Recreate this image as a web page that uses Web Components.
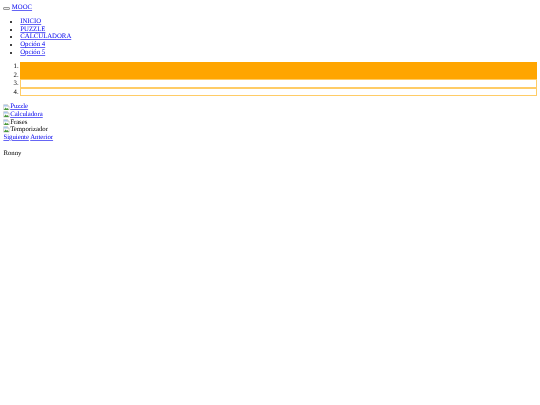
<!DOCTYPE html>
<html lang="es">
<head>
<meta charset="utf-8">
<title>MOOC</title>
<style>
  html, body { margin: 0; background: #fff; }
</style>
</head>
<body>
<mooc-page>
  <site-header></site-header>
  <slide-dots></slide-dots>
  <slide-list>
    <slide-item icon href="#">Puzzle</slide-item>
    <slide-item icon href="#">Calculadora</slide-item>
    <slide-item icon>Frases</slide-item>
    <slide-item icon>Temporizador</slide-item>
    <slide-item><a href="#">Siguiente</a> <a href="#">Anterior</a></slide-item>
  </slide-list>
  <site-footer>Ronny</site-footer>
</mooc-page>

<script>
// shared link colours, rules from outside don't reach the shadow roots
const linkCss = 'a { color: #00e; text-decoration: underline rgba(0, 0, 238, 0.6); }';

// the reference is a 1280 wide page shrunk to 540, hence the small sizes
// the blur stands in for the softness of the shrunk picture
class MoocPage extends HTMLElement {
  constructor() {
    super();
    this.shadow = this.attachShadow({mode: 'open'});
    this.shadow.innerHTML = `
      <style>
        :host {
          display: block;
          padding: 3.9px 3.375px 3.375px;
          font: 6.75px/7.6px "Liberation Serif", "Times New Roman", serif;
          text-rendering: geometricPrecision;
          color: #000;
          filter: blur(0.4px);
        }
      </style>
      <slot></slot>
    `;
  }
}

class SiteHeader extends HTMLElement {
  constructor() {
    super();
    this.shadow = this.attachShadow({mode: 'open'});
    this.shadow.innerHTML = `
      <style>
        :host { display: block; }
        ${linkCss}
        button {
          box-sizing: border-box;
          width: 6.75px;
          height: 2.5px;
          padding: 0;
          margin: 0 1.7px 0 0;
          background: #efefef;
          border: 0.5px solid #999;
          border-radius: 1px;
        }
        ul { margin: 6.75px 0 0; padding-left: 16.875px; }
      </style>
      <div><button></button><a href="#">MOOC</a></div>
      <ul>
        <li><a href="#">INICIO</a></li>
        <li><a href="#">PUZZLE</a></li>
        <li><a href="#">CALCULADORA</a></li>
        <li><a href="#">Opción 4</a></li>
        <li><a href="#">Opción 5</a></li>
      </ul>
    `;
  }
}

class SlideDots extends HTMLElement {
  constructor() {
    super();
    this.shadow = this.attachShadow({mode: 'open'});
    this.shadow.innerHTML = `
      <style>
        :host { display: block; }
        ol { margin: 6.25px 0 7.25px; padding-left: 16.875px; }
        li { box-sizing: border-box; height: 8.44px; border: 1px solid #ffcc66; background: #fff; }
        li.on { background: orange; border-color: orange; }
      </style>
      <ol>
        <li class="on"></li>
        <li class="on"></li>
        <li></li>
        <li></li>
      </ol>
    `;
  }
}

class SlideList extends HTMLElement {
  constructor() {
    super();
    this.shadow = this.attachShadow({mode: 'open'});
    this.shadow.innerHTML = `
      <style>
        :host { display: block; }
      </style>
      <slot></slot>
    `;
  }
}

class SlideItem extends HTMLElement {
  constructor() {
    super();
    this.shadow = this.attachShadow({mode: 'open'});
    const icon = this.hasAttribute('icon') ? `
      <svg width="6.75" height="6.75" viewBox="0 0 16 16">
        <path d="M1.5 1.5h9l4 4v9h-13z" fill="#fff" stroke="#9a9a9a"/>
        <path d="M10.5 1.5v4h4" fill="#e8e8e8" stroke="#9a9a9a"/>
        <path d="M2 14l4-6 3 3 2-1.5 3 4.5z" fill="#4a9a3c"/>
        <path d="M2 2h8v4H2z" fill="#a9c8f0"/>
      </svg>` : '';
    const href = this.getAttribute('href');
    const body = href !== null ? `<a href="${href}">${icon}<slot></slot></a>` : `${icon}<slot></slot>`;
    this.shadow.innerHTML = `
      <style>
        :host { display: block; height: 7.6px; }
        ${linkCss}
        svg { vertical-align: -0.85px; margin: -1px 0; }
        ::slotted(a) { color: #00e; text-decoration: underline rgba(0, 0, 238, 0.6); }
      </style>
      ${body}
    `;
  }
}

class SiteFooter extends HTMLElement {
  constructor() {
    super();
    this.shadow = this.attachShadow({mode: 'open'});
    this.shadow.innerHTML = `
      <style>
        :host { display: block; margin: 8.9px 0 6.75px; }
      </style>
      <slot></slot>
    `;
  }
}

customElements.define('mooc-page', MoocPage);
customElements.define('site-header', SiteHeader);
customElements.define('slide-dots', SlideDots);
customElements.define('slide-list', SlideList);
customElements.define('slide-item', SlideItem);
customElements.define('site-footer', SiteFooter);
</script>
</body>
</html>
